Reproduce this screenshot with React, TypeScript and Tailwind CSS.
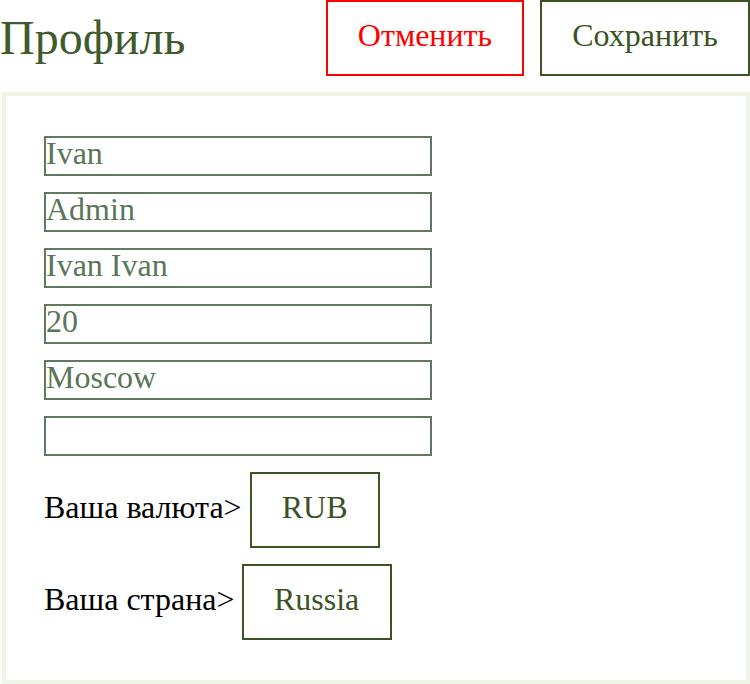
import { useState } from "react";

const fields = ["Ivan", "Admin", "Ivan Ivan", "20", "Moscow", ""];

export default function App() {
  const [values, setValues] = useState<string[]>(fields);

  function update(i: number, v: string) {
    setValues((prev) => prev.map((x, j) => (j === i ? v : x)));
  }

  return (
    <div className="w-[750px] bg-white font-['Liberation_Serif',serif]">
      {/* Header */}
      <div className="flex h-[76px] items-center">
        <h1 className="flex-1 text-[48px] leading-none font-normal text-[#3f5a2c]">Профиль</h1>
        <button className="h-[76px] w-[198px] border-2 border-[#ff0000] pb-[6px] text-[32px] leading-none text-[#ff0000]">
          Отменить
        </button>
        <button className="ml-[16px] h-[76px] w-[210px] border-2 border-[#3b5323] pb-[6px] text-[32px] leading-none text-[#3b5323]">
          Сохранить
        </button>
      </div>

      {/* Form panel */}
      <div className="mt-[16px] ml-[2px] border-4 border-[#eef5e6] pt-[40px] pb-[40px] pl-[38px]">
        <div className="flex flex-col gap-[16px]">
          {values.map((v, i) => (
            <input
              key={i}
              value={v}
              onChange={(e) => update(i, e.target.value)}
              className="block h-[40px] w-[388px] border-2 border-[#5f7a5f] px-0 pt-0 pb-[6px] text-[32px] leading-[30px] text-[#5a7559] outline-none"
            />
          ))}

          <div className="flex items-center text-[32px] leading-none text-black">
            <span className="pb-[6px]">Ваша валюта&gt;</span>
            <button className="ml-[8px] h-[76px] w-[130px] border-2 border-[#3b5323] pb-[6px] text-[32px] leading-none text-[#3b5323]">
              RUB
            </button>
          </div>

          <div className="flex items-center text-[32px] leading-none text-black">
            <span className="pb-[6px]">Ваша страна&gt;</span>
            <button className="ml-[7px] h-[76px] w-[150px] border-2 border-[#3b5323] pb-[6px] text-[32px] leading-none text-[#3b5323]">
              Russia
            </button>
          </div>
        </div>
      </div>
    </div>
  );
}
